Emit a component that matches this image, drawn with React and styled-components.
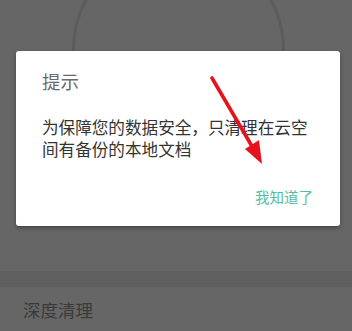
import React from "react";
import styled, { createGlobalStyle } from "styled-components";

const Global = createGlobalStyle`
  html, body { margin: 0; padding: 0; }
  body {
    background: #666666;
    font-family: "Noto Sans CJK SC", "Noto Sans", sans-serif;
  }
`;

const Screen = styled.div`
  position: relative;
  width: 352px;
  height: 331px;
  overflow: hidden;
  background: #666666;
  display: flex;
  flex-direction: column;
`;

const Hero = styled.div`
  height: 271px;
  flex: none;
  overflow: hidden;
`;

const Ring = styled.div`
  width: 207px;
  height: 207px;
  margin: -57px 0 0 72px;
  border: 3px solid #5c5c5c;
  border-radius: 50%;
`;

const Band = styled.div`
  height: 16px;
  flex: none;
  background: #5f5f5f;
`;

const Row = styled.div`
  display: flex;
  align-items: center;
  height: 44px;
  padding-left: 23px;
  font-size: 17.5px;
  color: #3a3a3a;
`;

const Dialog = styled.div`
  position: absolute;
  left: 16px;
  top: 51px;
  width: 324px;
  height: 175px;
  box-sizing: border-box;
  background: #ffffff;
  border-radius: 3px;
  box-shadow: 0 2px 4px rgba(0, 0, 0, 0.35);
  padding: 18px 27px 0 26px;
  display: flex;
  flex-direction: column;
`;

const Title = styled.div`
  font-size: 18.5px;
  line-height: 24px;
  color: #6a6a6a;
`;

const Message = styled.div`
  margin-top: 24px;
  font-size: 16.6px;
  line-height: 21.5px;
  color: #333333;
`;

const Actions = styled.div`
  display: flex;
  justify-content: flex-end;
  margin-top: 27px;
`;

const TextButton = styled.button`
  border: none;
  background: none;
  padding: 0;
  font-family: inherit;
  font-size: 14.5px;
  line-height: 20px;
  color: #55bea2;
`;

const Annotation = styled.svg`
  position: absolute;
  left: 0;
  top: 0;
  pointer-events: none;
`;

export default function App() {
  return (
    <>
      <Global />
      <Screen>
        <Hero>
          <Ring />
        </Hero>
        <Band />
        <Row>深度清理</Row>
        <Dialog>
          <Title>提示</Title>
          <Message>为保障您的数据安全，只清理在云空间有备份的本地文档</Message>
          <Actions>
            <TextButton>我知道了</TextButton>
          </Actions>
        </Dialog>
        <Annotation width="352" height="331" viewBox="0 0 352 331">
          <line x1="212" y1="78" x2="253" y2="148" stroke="#e8121c" strokeWidth="3.6" strokeLinecap="round" />
          <polygon points="245,149 259,140 262,164" fill="#e8121c" />
        </Annotation>
      </Screen>
    </>
  );
}
